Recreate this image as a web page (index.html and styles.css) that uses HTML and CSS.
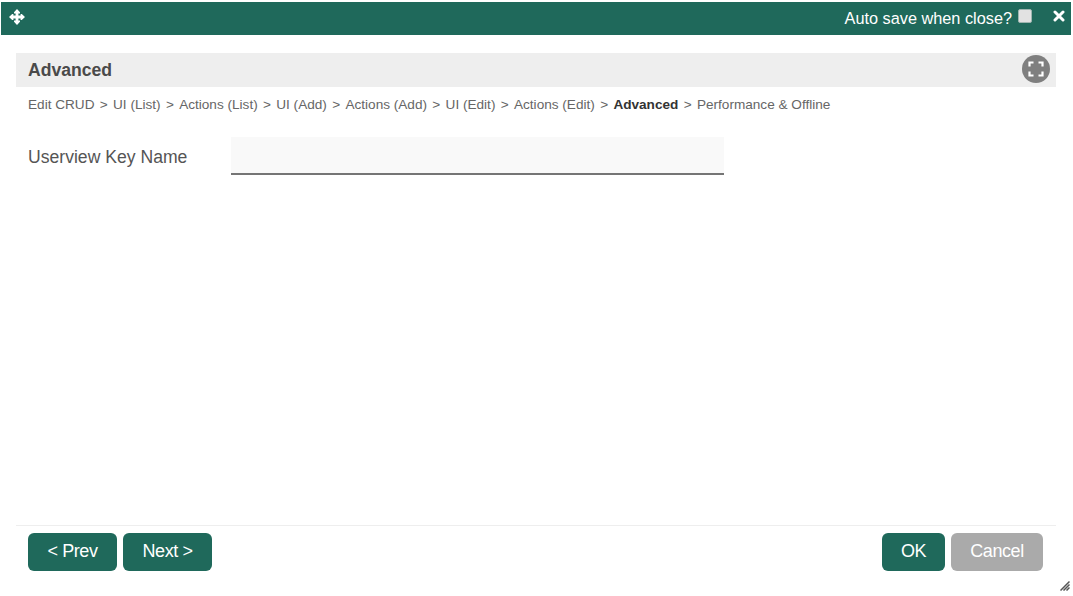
FILE: index.html
```html
<!DOCTYPE html>
<html lang="en">
<head>
<meta charset="utf-8">
<title>Advanced</title>
<link rel="stylesheet" href="styles.css">
</head>
<body>
<div class="dialog">
  <header class="titlebar">
    <svg class="move-icon" viewBox="0 0 16 16" width="16" height="16" aria-hidden="true"><path d="M8 0 L11 3.2 V4.4 H9.4 V6.6 H11.6 V5 H12.8 L16 8 L12.8 11 H11.6 V9.4 H9.4 V11.6 H11 V12.8 L8 16 L5 12.8 V11.6 H6.6 V9.4 H4.4 V11 H3.2 L0 8 L3.2 5 H4.4 V6.6 H6.6 V4.4 H5 V3.2 Z" fill="#fff"/></svg>
    <div class="autosave">
      <span class="autosave-label">Auto save when close?</span>
      <span class="checkbox"></span>
      <svg class="close-icon" viewBox="0 0 12 12" width="12" height="12" aria-hidden="true"><path d="M2 2 L10 10 M10 2 L2 10" stroke="#fff" stroke-width="3" stroke-linecap="round"/></svg>
    </div>
  </header>
  <main class="content">
    <div class="section-head">
      <h1 class="section-title">Advanced</h1>
      <span class="fullscreen">
        <svg viewBox="0 0 16 16" width="16" height="16" aria-hidden="true"><path d="M1.5 5.5 V1.5 H5.5 M10.5 1.5 H14.5 V5.5 M14.5 10.5 V14.5 H10.5 M5.5 14.5 H1.5 V10.5" fill="none" stroke="#fff" stroke-width="2.2"/></svg>
      </span>
    </div>
    <nav class="crumbs">
      <span>Edit CRUD</span><i>&gt;</i><span>UI (List)</span><i>&gt;</i><span>Actions (List)</span><i>&gt;</i><span>UI (Add)</span><i>&gt;</i><span>Actions (Add)</span><i>&gt;</i><span>UI (Edit)</span><i>&gt;</i><span>Actions (Edit)</span><i>&gt;</i><span class="current">Advanced</span><i>&gt;</i><span>Performance &amp; Offline</span>
    </nav>
    <div class="field">
      <label class="field-label" for="key">Userview Key Name</label>
      <input class="field-input" id="key" type="text">
    </div>
  </main>
  <footer class="actions">
    <div class="btn-group">
      <button class="btn btn-prev" type="button">&lt; Prev</button>
      <button class="btn btn-next" type="button">Next &gt;</button>
    </div>
    <div class="btn-group">
      <button class="btn btn-ok" type="button">OK</button>
      <button class="btn btn-cancel" type="button">Cancel</button>
    </div>
  </footer>
  <svg class="grip" viewBox="0 0 10 10" width="10" height="10" aria-hidden="true"><path d="M0.5 9.5 L9.5 0.5 M3.5 9.5 L9.5 3.5 M6.5 9.5 L9.5 6.5" stroke="#555" stroke-width="1.5" fill="none"/></svg>
</div>
</body>
</html>
```

FILE: styles.css
```css
* { box-sizing: border-box; }
html, body { margin: 0; padding: 0; background: #fff; }
body { font-family: "Liberation Sans", Arial, sans-serif; overflow: hidden; }
.dialog { position: relative; height: 596px; display: flex; flex-direction: column; }
.titlebar {
  height: 33px; margin: 2px 2px 0 1px; background: #1f695b; color: #fff;
  display: flex; align-items: center; justify-content: space-between; padding: 0 6px 0 8px;
}
.move-icon { margin-top: -3px; }
.autosave { display: flex; align-items: center; }
.autosave-label { font-size: 16.3px; }
.checkbox {
  width: 14px; height: 14px; margin: -5px 0 0 6px; background: #e2e2e2;
  border: 1px solid #9fb5b0; border-radius: 2px;
}
.close-icon { margin: -5px 0 0 21px; }
.content { flex: 1; padding: 18px 17px 0 16px; }
.section-head {
  height: 34px; background: #eee; display: flex; align-items: center;
  justify-content: space-between; padding: 0 6px 2px 12px;
}
.section-title { margin: 2px 0 0; font-size: 17.6px; font-weight: bold; color: #4a4a4a; }
.fullscreen {
  width: 28px; height: 28px; border-radius: 50%; background: #7f7f7f;
  display: flex; align-items: center; justify-content: center;
}
.crumbs { margin-top: 9px; padding-left: 12px; font-size: 13.6px; line-height: 17px; color: #666; display: flex; }
.crumbs i { font-style: normal; margin: 0 5.3px; }
.crumbs .current { font-weight: bold; color: #333; }
.field { display: flex; align-items: center; margin-top: 24px; padding-left: 12px; }
.field-label { width: 203px; font-size: 17.6px; color: #555; padding-top: 2px; }
.field-input {
  width: 493px; height: 38px; border: 0; border-bottom: 2px solid #757575;
  background: #f9f9f9; outline: none; padding: 0 8px;
}
.actions {
  height: 71px; margin: 0 17px 0 16px; border-top: 1px solid #eee;
  display: flex; justify-content: space-between; padding: 7px 13px 0 12px;
}
.btn-group { display: flex; gap: 6px; }
.btn {
  height: 38px; border: 0; border-radius: 6px; background: #1f695b; color: #fff;
  font-family: inherit; font-size: 18px; padding: 0 0 2px; letter-spacing: -0.4px;
}
.btn-prev, .btn-next { width: 89px; }
.btn-ok { width: 63px; }
.btn-cancel { width: 92px; background: #aaa; }
.grip { position: absolute; right: 3px; bottom: 5px; }
```
